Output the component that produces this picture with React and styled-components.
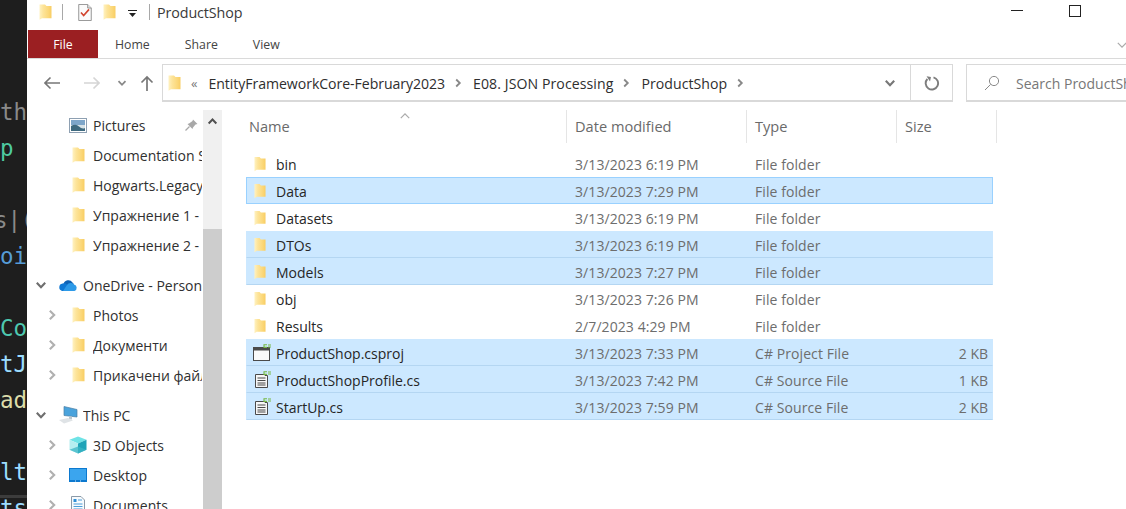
import React, { useId } from "react";
import styled, { createGlobalStyle } from "styled-components";

const Global = createGlobalStyle`
  html, body { margin: 0; padding: 0; background: #fff; overflow: hidden; }
  #root { width: 1126px; height: 509px; overflow: hidden; }
`;

const Shell = styled.div`
  display: flex;
  width: 1126px;
  height: 509px;
  overflow: hidden;
  font-family: "Open Sans", "Noto Sans", sans-serif;
  font-size: 14px;
  color: #2b2b2b;
`;

const CodeStrip = styled.div`
  position: relative;
  flex: 0 0 27px;
  height: 509px;
  padding-top: 94px;
  box-sizing: border-box;
  background: #1e1e1e;
  overflow: hidden;
  font-family: "DejaVu Sans Mono", monospace;
  font-size: 22.5px;
  &::after {
    content: "";
    position: absolute;
    left: 0;
    right: 0;
    top: 495px;
    height: 3px;
    background: #3c3c3c;
  }
`;

const CodeLine = styled.div`
  height: 36px;
  line-height: 36px;
  white-space: nowrap;
  color: ${(p) => p.$color};
  margin-left: ${(p) => p.$shift || 0}px;
`;

const Win = styled.div`
  flex: 1;
  min-width: 0;
  display: flex;
  flex-direction: column;
  background: #fff;
`;

const TitleBar = styled.div`
  flex: 0 0 30px;
  display: flex;
  align-items: center;
  padding-left: 12px;
  padding-bottom: 6px;
  box-sizing: border-box;
`;

const QuickIcon = styled.span`
  display: flex;
  margin-left: ${(p) => p.$ml || 0}px;
  margin-top: ${(p) => p.$mt || 0}px;
`;

const TitleRule = styled.span`
  width: 1px;
  height: 16px;
  background: #a8a8a8;
  margin-left: ${(p) => p.$ml}px;
`;

const TitleText = styled.span`
  margin-left: 7px;
  font-size: 14.3px;
  letter-spacing: -0.1px;
  color: #3a3a3a;
`;

const WinControls = styled.div`
  margin-left: auto;
  display: flex;
  align-items: center;
  padding-right: 45px;
  gap: 46px;
`;

const MinBtn = styled.span`
  width: 12px;
  height: 1px;
  margin-top: -4px;
  background: #222;
`;

const MaxBtn = styled.span`
  width: 10px;
  height: 10px;
  margin-top: -2px;
  border: 1px solid #222;
`;

const TabBar = styled.div`
  flex: 0 0 29px;
  display: flex;
  align-items: stretch;
  box-sizing: border-box;
  border-bottom: 1px solid #dadada;
  position: relative;
`;

const FileTab = styled.div`
  width: 70px;
  margin-left: 1px;
  display: flex;
  align-items: center;
  justify-content: center;
  background: #9b1f22;
  color: #fff;
  font-size: 12.3px;
`;

const Tab = styled.div`
  display: flex;
  align-items: center;
  margin-left: ${(p) => p.$ml}px;
  font-size: 12.3px;
  color: #444;
`;

const Collapse = styled.span`
  margin-left: auto;
  display: flex;
  align-items: center;
  margin-right: -2px;
  padding-top: 2px;
`;

const NavBar = styled.div`
  flex: 0 0 38px;
  margin-top: 5px;
  display: flex;
  align-items: stretch;
`;

const NavButtons = styled.div`
  flex: 0 0 135px;
  display: flex;
  align-items: center;
  padding-left: 17px;
  box-sizing: border-box;
`;

const NavButton = styled.span`
  display: flex;
  margin-left: ${(p) => p.$ml || 0}px;
`;

const AddressBox = styled.div`
  flex: 0 0 749px;
  box-sizing: border-box;
  display: flex;
  align-items: center;
  border: 1px solid #d9d9d9;
  border-bottom-width: 2px;
  padding-left: 5px;
`;

const Crumb = styled.span`
  margin-left: ${(p) => p.$ml}px;
  padding-top: 1px;
  font-size: 14.1px;
  letter-spacing: ${(p) => p.$ls}px;
  color: #2e2e2e;
  white-space: nowrap;
`;

const Guillemet = styled.span`
  margin-left: 10px;
  font-size: 13px;
  color: #777;
`;

const CrumbArrow = styled.span`
  display: flex;
  margin-left: 8px;
`;

const Drop = styled.span`
  margin-left: auto;
  margin-right: 14px;
  display: flex;
`;

const RefreshBox = styled.div`
  flex: 0 0 42px;
  box-sizing: border-box;
  display: flex;
  align-items: center;
  justify-content: center;
  border: 1px solid #d9d9d9;
  border-left: 0;
  border-bottom-width: 2px;
`;

const SearchBox = styled.div`
  flex: 1;
  margin-left: 13px;
  margin-right: -60px;
  box-sizing: border-box;
  display: flex;
  align-items: center;
  border: 1px solid #d9d9d9;
  border-bottom-width: 2px;
  padding-left: 17px;
`;

const SearchText = styled.span`
  margin-left: 16px;
  padding-top: 1px;
  font-size: 14px;
  color: #777;
  white-space: nowrap;
`;

const Body = styled.div`
  flex: 1;
  min-height: 0;
  margin-top: 8px;
  display: flex;
`;

const NavPane = styled.div`
  flex: 0 0 176px;
  overflow: hidden;
`;

const NavRow = styled.div`
  height: 30px;
  display: flex;
  align-items: center;
  padding-left: ${(p) => (p.$group ? 8 : 19)}px;
  margin-top: ${(p) => (p.$group ? 10 : 0)}px;
  white-space: nowrap;
  color: #303030;
`;

const Twist = styled.span`
  flex: 0 0 12px;
  display: flex;
  justify-content: center;
`;

const NavIcon = styled.span`
  flex: 0 0 ${(p) => (p.$group ? 20 : 18)}px;
  margin-left: 11px;
  display: flex;
  justify-content: center;
`;

const NavLabel = styled.span`
  flex: 1;
  min-width: 0;
  overflow: hidden;
  margin-left: ${(p) => (p.$group ? 5 : 6)}px;
  margin-right: 1px;
`;

const Pin = styled.span`
  display: flex;
  margin-right: 5px;
`;

const ScrollTrack = styled.div`
  flex: 0 0 19px;
  display: flex;
  flex-direction: column;
  background: #f0f0f0;
`;

const ScrollArrow = styled.div`
  height: 22px;
  display: flex;
  align-items: center;
  justify-content: center;
`;

const ScrollGap = styled.div`
  flex: 0 0 97px;
`;

const ScrollThumb = styled.div`
  flex: 1;
  background: #cdcdcd;
`;

const FilePane = styled.div`
  flex: 1;
  min-width: 0;
  padding-left: 24px;
`;

const HeaderRow = styled.div`
  position: relative;
  width: 751px;
  height: 33px;
  display: grid;
  grid-template-columns: 321px 180px 150px 100px;
`;

const HeaderCell = styled.div`
  display: flex;
  align-items: center;
  padding-left: ${(p) => (p.$first ? 3 : 8)}px;
  padding-bottom: 2px;
  border-right: 1px solid #e5e5e5;
  color: #6a6a6a;
  font-size: 14.6px;
`;

const SortCaret = styled.span`
  position: absolute;
  left: 153px;
  top: 0;
  display: flex;
`;

const FileList = styled.div`
  margin-top: 7px;
  width: 747px;
`;

const Row = styled.div`
  height: 27px;
  box-sizing: border-box;
  display: grid;
  grid-template-columns: 321px 180px 150px 1fr;
  align-items: center;
  background: ${(p) => (p.$selected ? "#cce8ff" : "#fff")};
  border: 1px solid ${(p) => (p.$focused ? "#99d1ff" : "transparent")};
  border-bottom-color: ${(p) =>
    p.$focused ? "#99d1ff" : p.$selected ? "#b4d6f2" : "transparent"};
`;

const NameCell = styled.div`
  display: flex;
  align-items: center;
  padding-left: ${(p) => p.$pad}px;
  padding-top: 1px;
  color: #262626;
`;

const NameIcon = styled.span`
  flex: 0 0 ${(p) => p.$w}px;
  display: flex;
  margin-top: -1px;
`;

const MetaCell = styled.div`
  padding-left: 7px;
  padding-top: 1px;
  color: #6d6d6d;
  font-size: 14px;
  letter-spacing: 0.08px;
`;

const SizeCell = styled.div`
  text-align: right;
  padding-right: 4px;
  padding-top: 1px;
  color: #6d6d6d;
  font-size: 14px;
`;

function Folder({ w = 13, h = 16 }) {
  const id = useId();
  return (
    <svg width={w} height={h} viewBox="0 0 13 16">
      <defs>
        <linearGradient id={id} x1="0" x2="1" y1="0" y2="0">
          <stop offset="0" stopColor="#fff2c2" />
          <stop offset="0.3" stopColor="#fde49a" />
          <stop offset="0.75" stopColor="#fbd778" />
          <stop offset="1" stopColor="#f8cd63" />
        </linearGradient>
      </defs>
      <path d="M0.5 0.5 H6 L7.5 2 H12.5 V14.2 H3 L0.5 15.8 Z" fill={`url(#${id})`} />
    </svg>
  );
}

const Chev = ({ dir = "down", size = 10, color = "#777", sw = 1.8 }) => {
  const paths = {
    down: "M1.5 3.2 L5 6.8 L8.5 3.2",
    up: "M1.5 6.8 L5 3.2 L8.5 6.8",
    right: "M3.2 1.5 L6.8 5 L3.2 8.5",
  };
  return (
    <svg width={size} height={size} viewBox="0 0 10 10">
      <path d={paths[dir]} fill="none" stroke={color} strokeWidth={sw} />
    </svg>
  );
};

const CheckDoc = () => (
  <svg width="14" height="17" viewBox="0 0 15 19">
    <path d="M0.5 0.5 H10.5 L14.5 4.5 V18.5 H0.5 Z" fill="#fbfbfb" stroke="#8a8a8a" />
    <path d="M10.5 0.5 V4.5 H14.5" fill="#e8e8e8" stroke="#8a8a8a" />
    <path d="M3 9.5 L6 13 L12 6" fill="none" stroke="#d2452f" strokeWidth="1.8" />
  </svg>
);

const DropArrow = () => (
  <svg width="9" height="8" viewBox="0 0 9 8">
    <rect x="0" y="0" width="9" height="1" fill="#222" />
    <path d="M1 3 H8 L4.5 7 Z" fill="#222" />
  </svg>
);

const ArrowShape = styled.svg`
  transform: ${(p) => (p.$flip ? "scaleX(-1)" : "none")};
`;

const Arrow = ({ color, flip }) => (
  <ArrowShape $flip={flip} width="16" height="14" viewBox="0 0 16 14">
    <path d="M16 7 H1 M6.5 1.5 L1 7 L6.5 12.5" fill="none" stroke={color} strokeWidth="1.6" />
  </ArrowShape>
);

const UpArrow = () => (
  <svg width="14" height="17" viewBox="0 0 14 17">
    <path d="M7 16 V2 M1.5 7.5 L7 2 L12.5 7.5" fill="none" stroke="#777" strokeWidth="1.7" />
  </svg>
);

const Refresh = () => (
  <svg width="16" height="16" viewBox="0 0 16 16">
    <path d="M9.5 2.3 A6.2 6.2 0 1 1 3.4 4" fill="none" stroke="#7d7d7d" strokeWidth="1.9" />
    <path d="M2 1.5 H6.5 V6 Z" fill="#7d7d7d" transform="rotate(12 4 4)" />
  </svg>
);

const SearchGlass = () => (
  <svg width="16" height="16" viewBox="0 0 16 16">
    <circle cx="10" cy="6" r="4.6" fill="none" stroke="#8a8a8a" strokeWidth="1" />
    <path d="M6.6 9.4 L1 15" stroke="#8a8a8a" strokeWidth="1" />
  </svg>
);

const PicturesIcon = () => (
  <svg width="18" height="15" viewBox="0 0 18 15">
    <rect x="0.5" y="0.5" width="17" height="14" fill="#fff" stroke="#8ea0b2" />
    <rect x="2" y="2" width="14" height="5" fill="#7ea6c9" />
    <rect x="2" y="7" width="14" height="6" fill="#d7e2e6" />
    <path d="M2 8 Q7 5.5 10 8.5 T16 10 V13 H2 Z" fill="#3f6a7f" />
  </svg>
);

const PinIcon = () => (
  <svg width="13" height="12" viewBox="0 0 13 12">
    <path d="M8 0.5 L12.5 5 L10.5 5.5 L8 8.5 L7.5 10 L2.5 5 L4 4.5 L7.5 2 Z" fill="#a8a8a8" />
    <path d="M4.5 7.5 L0.5 11.5" stroke="#a8a8a8" strokeWidth="1.2" />
  </svg>
);

const CloudIcon = () => (
  <svg width="20" height="14" viewBox="0 0 20 14">
    <path d="M5.5 6 A5 5 0 0 1 14.5 4.5 A4 4 0 0 1 16 6.5 L8 11 Z" fill="#0f62b4" />
    <path d="M4 13 A3.8 3.8 0 0 1 4.5 5.6 A4 4 0 0 1 9 6.5 L14 8.5 L10 13 Z" fill="#0f78d4" />
    <path d="M5 13 L9 7 A4.5 4.5 0 0 1 16 6.5 A3.4 3.4 0 0 1 16.5 13 Z" fill="#2d9ae8" />
  </svg>
);

const PcIcon = () => (
  <svg width="20" height="18" viewBox="0 0 20 18">
    <path d="M6 0.5 L19 3.5 V11 L6 9.5 Z" fill="#4aa3dc" stroke="#4b7fa5" strokeWidth="0.7" />
    <path d="M11 10 V13 L14 13.5 V10.5 Z" fill="#b9c6cf" />
    <path d="M1 14 L10 12 L15 14.5 L6 17.5 Z" fill="#dfe3e6" />
  </svg>
);

const CubeIcon = () => (
  <svg width="18" height="18" viewBox="0 0 18 18">
    <path d="M9 0.5 L17.5 3.8 L9 7.5 L0.5 3.8 Z" fill="#6fe3e6" />
    <path d="M0.5 3.8 L9 7.5 V17.5 L0.5 13.8 Z" fill="#b6eef0" />
    <path d="M17.5 3.8 L9 7.5 V17.5 L17.5 13.8 Z" fill="#1fa4b8" />
    <path d="M0.5 13.8 L9 10.5 L17.5 13.8 L9 17.5 Z" fill="#3bb5c5" opacity="0.75" />
  </svg>
);

const DesktopIcon = () => (
  <svg width="18" height="14" viewBox="0 0 18 14">
    <rect x="0" y="0" width="18" height="14" fill="#0c79cf" />
    <rect x="1" y="1" width="16" height="11" fill="#3ba5ee" />
    <rect x="6" y="12.5" width="1" height="1" fill="#cfe8fa" />
    <rect x="11" y="12.5" width="1" height="1" fill="#cfe8fa" />
  </svg>
);

const DocsIcon = () => (
  <svg width="14" height="18" viewBox="0 0 14 18">
    <path d="M0.5 0.5 H10 L13.5 4 V17.5 H0.5 Z" fill="#f7fbfe" stroke="#8b9aa8" />
    <rect x="2.5" y="3" width="3" height="3" fill="#2f8fd6" />
    <path d="M7 4 H11 M2.5 8 H11.5 M2.5 10.5 H11.5 M2.5 13 H11.5" stroke="#4d9ed9" strokeWidth="1" />
  </svg>
);

const ProjIcon = () => (
  <svg width="19" height="18" viewBox="0 0 19 18">
    <rect x="0.5" y="3.5" width="16" height="13" fill="#fafafa" stroke="#4a4a4a" />
    <rect x="0.5" y="3.5" width="16" height="3" fill="#4a4a4a" />
    <path d="M14 0.8 H11 V3.4 H14" fill="none" stroke="#76b843" strokeWidth="1.1" />
    <path d="M15 1 H18 M15 3 H18" stroke="#76b843" strokeWidth="1" />
  </svg>
);

const CsIcon = () => (
  <svg width="17" height="18" viewBox="0 0 17 18">
    <path d="M0.5 3.5 H10 V4.5 H12.5 V16.5 H0.5 Z" fill="#f6f6f6" stroke="#4a4a4a" />
    <path d="M2.5 7 H10.5 M2.5 9.5 H10.5 M2.5 12 H10.5 M2.5 14 H10.5" stroke="#4a4a4a" strokeWidth="1.1" />
    <path d="M12 0.8 H9 V3.4 H12" fill="none" stroke="#76b843" strokeWidth="1.1" />
    <path d="M13 1 H16 M13 3 H16" stroke="#76b843" strokeWidth="1" />
  </svg>
);

const code = [
  { t: "the", c: "#8a8a8a" },
  { t: "p", c: "#4ec9a0" },
  { t: "\u00a0", c: "#fff" },
  { t: "s|(", c: "#8a8a8a", shift: -6 },
  { t: "oi", c: "#569cd6" },
  { t: "\u00a0", c: "#fff" },
  { t: "Co", c: "#4ec9b0" },
  { t: "tJ", c: "#9cdcfe" },
  { t: "ad", c: "#dcdcaa" },
  { t: "\u00a0", c: "#fff" },
  { t: "lt", c: "#9cdcfe" },
  { t: "ts", c: "#9cdcfe" },
];

const navItems = [
  { label: "Pictures", icon: <PicturesIcon />, pin: true },
  { label: "Documentation Standards", icon: <Folder /> },
  { label: "Hogwarts.Legacy", icon: <Folder /> },
  { label: "Упражнение 1 - Основи", icon: <Folder /> },
  { label: "Упражнение 2 - Основи", icon: <Folder /> },
  { label: "OneDrive - Personal", icon: <CloudIcon />, group: true, open: true },
  { label: "Photos", icon: <Folder />, twist: true },
  { label: "Документи", icon: <Folder />, twist: true },
  { label: "Прикачени файлове", icon: <Folder />, twist: true },
  { label: "This PC", icon: <PcIcon />, group: true, open: true },
  { label: "3D Objects", icon: <CubeIcon />, twist: true },
  { label: "Desktop", icon: <DesktopIcon />, twist: true },
  { label: "Documents", icon: <DocsIcon />, twist: true },
];

const files = [
  { name: "bin", date: "3/13/2023 6:19 PM", type: "File folder" },
  { name: "Data", date: "3/13/2023 7:29 PM", type: "File folder", selected: true, focused: true },
  { name: "Datasets", date: "3/13/2023 6:19 PM", type: "File folder" },
  { name: "DTOs", date: "3/13/2023 6:19 PM", type: "File folder", selected: true },
  { name: "Models", date: "3/13/2023 7:27 PM", type: "File folder", selected: true },
  { name: "obj", date: "3/13/2023 7:26 PM", type: "File folder" },
  { name: "Results", date: "2/7/2023 4:29 PM", type: "File folder" },
  { name: "ProductShop.csproj", date: "3/13/2023 7:33 PM", type: "C# Project File", size: "2 KB", selected: true, kind: "proj" },
  { name: "ProductShopProfile.cs", date: "3/13/2023 7:42 PM", type: "C# Source File", size: "1 KB", selected: true, kind: "cs" },
  { name: "StartUp.cs", date: "3/13/2023 7:59 PM", type: "C# Source File", size: "2 KB", selected: true, kind: "cs" },
];

function FileIcon({ kind }) {
  if (kind === "proj") return <ProjIcon />;
  if (kind === "cs") return <CsIcon />;
  return <Folder w={12} h={16} />;
}

export default function App() {
  return (
    <>
      <Global />
      <Shell>
        <CodeStrip>
          {code.map((l, i) => (
            <CodeLine key={i} $color={l.c} $shift={l.shift}>{l.t}</CodeLine>
          ))}
        </CodeStrip>
        <Win>
          <TitleBar>
            <QuickIcon><Folder /></QuickIcon>
            <TitleRule $ml={10} />
            <QuickIcon $ml={15}><CheckDoc /></QuickIcon>
            <QuickIcon $ml={11}><Folder /></QuickIcon>
            <QuickIcon $ml={12} $mt={4}><DropArrow /></QuickIcon>
            <TitleRule $ml={12} />
            <TitleText>ProductShop</TitleText>
            <WinControls>
              <MinBtn />
              <MaxBtn />
            </WinControls>
          </TitleBar>
          <TabBar>
            <FileTab>File</FileTab>
            <Tab $ml={17}>Home</Tab>
            <Tab $ml={35}>Share</Tab>
            <Tab $ml={35}>View</Tab>
            <Collapse><Chev dir="down" size={12} color="#aaa" sw={1} /></Collapse>
          </TabBar>
          <NavBar>
            <NavButtons>
              <NavButton><Arrow color="#777" /></NavButton>
              <NavButton $ml={24}><Arrow color="#d5d5d5" flip /></NavButton>
              <NavButton $ml={17}><Chev dir="down" size={10} color="#888" /></NavButton>
              <NavButton $ml={13}><UpArrow /></NavButton>
            </NavButtons>
            <AddressBox>
              <Folder />
              <Guillemet>«</Guillemet>
              <Crumb $ml={11} $ls={-0.05}>EntityFrameworkCore-February2023</Crumb>
              <CrumbArrow><Chev dir="right" color="#888" /></CrumbArrow>
              <Crumb $ml={10} $ls={0.08}>E08. JSON Processing</Crumb>
              <CrumbArrow><Chev dir="right" color="#888" /></CrumbArrow>
              <Crumb $ml={10} $ls={0.05}>ProductShop</Crumb>
              <CrumbArrow><Chev dir="right" color="#888" /></CrumbArrow>
              <Drop><Chev dir="down" size={12} color="#777" /></Drop>
            </AddressBox>
            <RefreshBox><Refresh /></RefreshBox>
            <SearchBox>
              <SearchGlass />
              <SearchText>Search ProductShop</SearchText>
            </SearchBox>
          </NavBar>
          <Body>
            <NavPane>
              {navItems.map((n) => (
                <NavRow key={n.label} $group={n.group}>
                  <Twist>
                    {n.open && <Chev dir="down" size={12} color="#6e6e6e" />}
                    {n.twist && <Chev dir="right" size={12} color="#b0b0b0" />}
                  </Twist>
                  <NavIcon $group={n.group}>{n.icon}</NavIcon>
                  <NavLabel $group={n.group}>{n.label}</NavLabel>
                  {n.pin && <Pin><PinIcon /></Pin>}
                </NavRow>
              ))}
            </NavPane>
            <ScrollTrack>
              <ScrollArrow><Chev dir="up" size={11} color="#505050" /></ScrollArrow>
              <ScrollGap />
              <ScrollThumb />
            </ScrollTrack>
            <FilePane>
              <HeaderRow>
                <SortCaret><Chev dir="up" size={12} color="#aaa" sw={1} /></SortCaret>
                <HeaderCell $first>Name</HeaderCell>
                <HeaderCell>Date modified</HeaderCell>
                <HeaderCell>Type</HeaderCell>
                <HeaderCell>Size</HeaderCell>
              </HeaderRow>
              <FileList>
                {files.map((f) => (
                  <Row key={f.name} $selected={f.selected} $focused={f.focused}>
                    <NameCell $pad={f.kind === "proj" ? 6 : f.kind === "cs" ? 8 : 7}>
                      <NameIcon $w={f.kind === "proj" ? 23 : f.kind === "cs" ? 21 : 22}>
                        <FileIcon kind={f.kind} />
                      </NameIcon>
                      {f.name}
                    </NameCell>
                    <MetaCell>{f.date}</MetaCell>
                    <MetaCell>{f.type}</MetaCell>
                    <SizeCell>{f.size}</SizeCell>
                  </Row>
                ))}
              </FileList>
            </FilePane>
          </Body>
        </Win>
      </Shell>
    </>
  );
}
